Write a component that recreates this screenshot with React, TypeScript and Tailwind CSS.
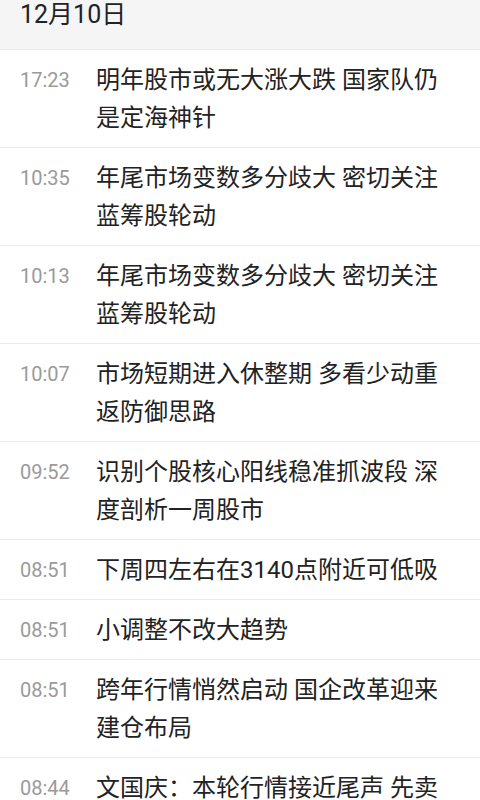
const items = [
  { time: "17:23", title: "明年股市或无大涨大跌 国家队仍是定海神针" },
  { time: "10:35", title: "年尾市场变数多分歧大 密切关注蓝筹股轮动" },
  { time: "10:13", title: "年尾市场变数多分歧大 密切关注蓝筹股轮动" },
  { time: "10:07", title: "市场短期进入休整期 多看少动重返防御思路" },
  { time: "09:52", title: "识别个股核心阳线稳准抓波段 深度剖析一周股市" },
  { time: "08:51", title: "下周四左右在3140点附近可低吸" },
  { time: "08:51", title: "小调整不改大趋势" },
  { time: "08:51", title: "跨年行情悄然启动 国企改革迎来建仓布局" },
  { time: "08:44", title: "文国庆：本轮行情接近尾声 先卖后买" },
];

export default function App() {
  return (
    <div className="h-[800px] w-[480px] overflow-hidden bg-white font-['Roboto','Noto_Sans_CJK_SC',sans-serif]">
      <div className="h-[50px] border-b border-[#ebebeb] bg-[#f5f5f5] px-5">
        <h1 className="text-[25px] leading-[30px] text-[#222]">12月10日</h1>
      </div>
      <ul>
        {items.map((item, i) => (
          <li key={i} className="flex border-b border-[#ebebeb] py-[10.5px] pl-5 pr-[30px]">
            <span className="w-[76px] shrink-0 text-[20px] leading-[38px] text-[#9a9a9a]">{item.time}</span>
            <p className="flex-1 text-[24px] leading-[38px] text-[#222]">{item.title}</p>
          </li>
        ))}
      </ul>
    </div>
  );
}
